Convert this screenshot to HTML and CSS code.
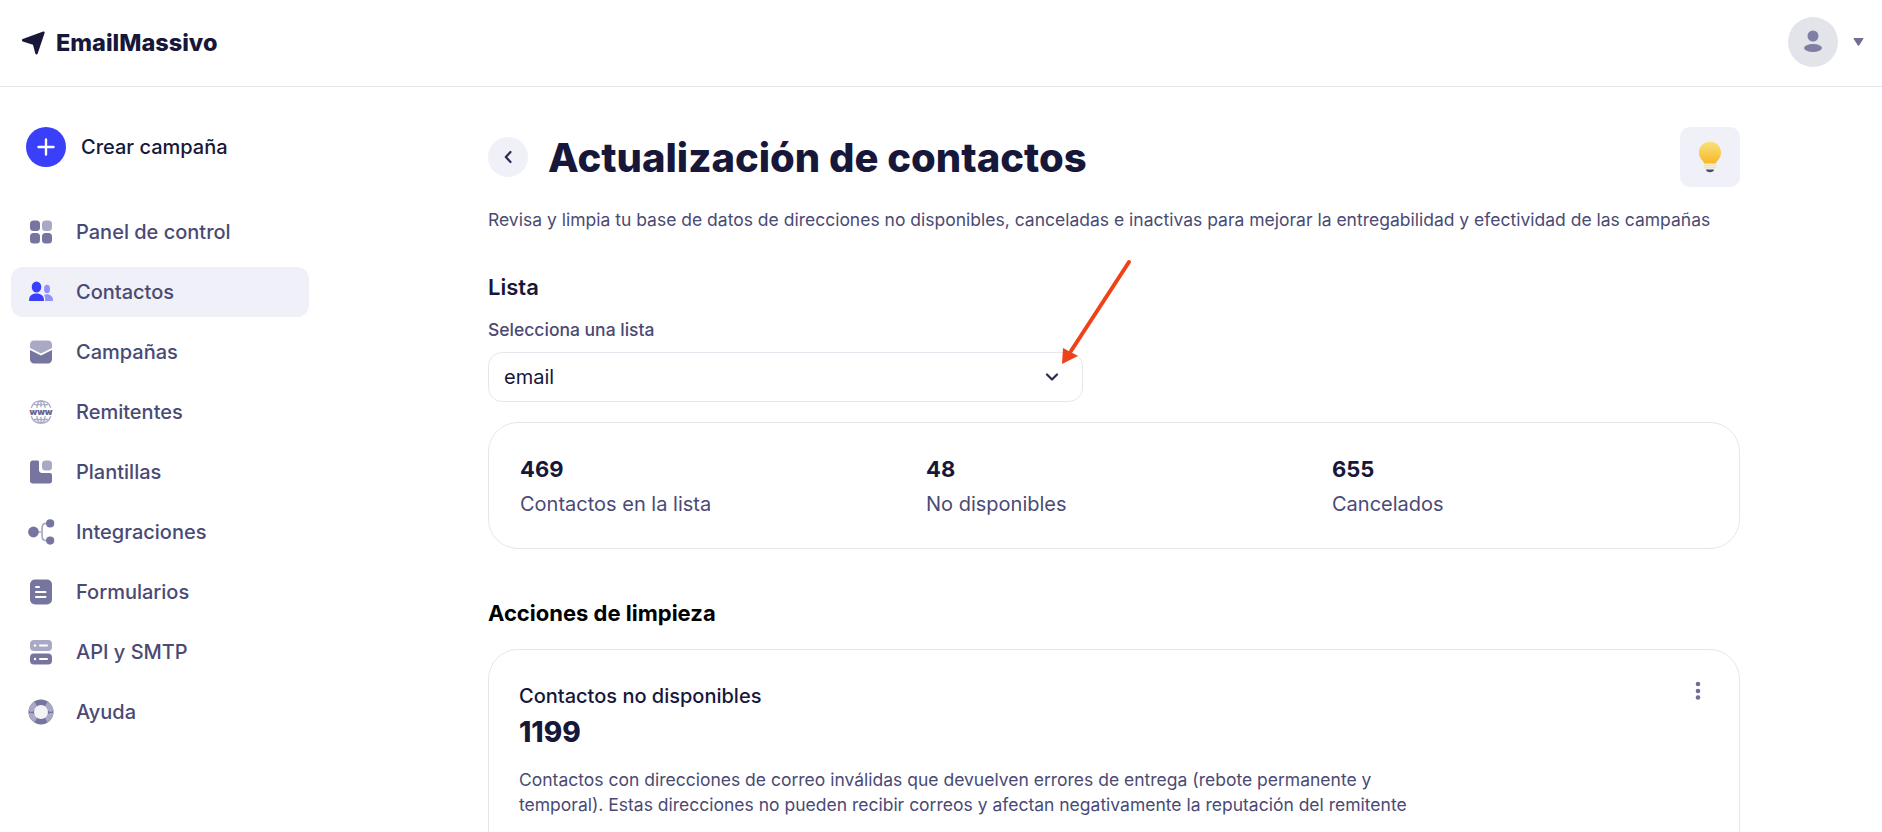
FILE: index.html
```html
<!DOCTYPE html>
<html lang="es">
<head>
  <meta charset="UTF-8">
  <meta name="viewport" content="width=device-width, initial-scale=1.0">
  <title>Actualización de contactos</title>
  <link rel="stylesheet" href="styles.css">
</head>
<body>
  <header class="topbar">
    <div class="brand">
      <svg class="brand-icon" viewBox="0 0 24 24"><path d="M22.200 .6c.9-.3 1.700.5 1.400 1.400l-7 20.700c-.4 1.100-1.900 1.100-2.200 0l-2.400-9-10.300-3.300c-1.100-.4-1.100-1.900 0-2.300z" fill="#17173a"/></svg>
      <span>EmailMassivo</span>
    </div>
    <div class="account">
      <div class="avatar">
        <svg viewBox="0 0 50 50" width="50" height="50"><circle cx="25" cy="19" r="5.500" fill="#7f7fa3"/><ellipse cx="25" cy="31" rx="9" ry="4" fill="#7f7fa3"/></svg>
      </div>
      <svg class="caret" viewBox="0 0 10 8" width="11" height="8"><path d="M.8 0h8.400c.6 0 .9.6.6 1.100L5.600 7.400c-.3.4-.9.4-1.200 0L.2 1.100C-.1.600.2 0 .8 0z" fill="#6f6f95"/></svg>
    </div>
  </header>

  <div class="layout">
    <aside class="sidebar">
      <div class="create">
        <span class="create-btn">
          <svg viewBox="0 0 40 40" width="40" height="40"><path d="M20 12.500v15M12.500 20h15" stroke="#fff" stroke-width="2.400" stroke-linecap="round"/></svg>
        </span>
        <span>Crear campaña</span>
      </div>
      <nav class="nav">
        <a class="nav-item">
          <svg viewBox="0 0 24 24"><rect x="1" y="0.500" width="10" height="10.500" rx="3.500" fill="#7575a0"/><rect x="13" y="0.500" width="10" height="10.500" rx="3.500" fill="#a9a9c6"/><rect x="1" y="13" width="10" height="10.500" rx="3.500" fill="#7575a0"/><rect x="13" y="13" width="10" height="10.500" rx="3.500" fill="#7575a0"/></svg>
          Panel de control
        </a>
        <a class="nav-item active">
          <svg viewBox="0 0 24 24"><ellipse cx="7.500" cy="7" rx="4.800" ry="5.500" fill="#3a3ffa"/><path d="M0 20.500c0-4.500 3-7 7.500-7s7.500 2.500 7.500 7c0 .4-.2.500-.6.500H.6c-.4 0-.6-.1-.6-.5z" fill="#3a3ffa"/><ellipse cx="18" cy="9" rx="3" ry="4.300" fill="#8f92fb"/><path d="M16 21c.5-1.500.3-4.500-1-6 .8-.5 1.800-.7 3-.7 3.500 0 6 2.300 6 6.200 0 .4-.2.500-.5.500z" fill="#8f92fb"/></svg>
          Contactos
        </a>
        <a class="nav-item">
          <svg viewBox="0 0 24 24"><path d="M1 4.500C1 2 3 .5 5 .5h14c2 0 4 1.500 4 4V8l-11 5.500L1 8z" fill="#a9a9c6"/><path d="M1 10l11 5.500L23 10v9.500c0 2.200-1.800 4-4 4H5c-2.200 0-4-1.800-4-4z" fill="#7575a0"/></svg>
          Campañas
        </a>
        <a class="nav-item">
          <svg viewBox="0 0 28 28" class="icon-wide">
            <g fill="none" stroke="#a9a9c6" stroke-width="1.500">
              <path d="M3.500 9.500C5 5 9 2 14 2s9 3 10.500 7.500"/>
              <path d="M3.500 18.500C5 23 9 26 14 26s9-3 10.500-7.500"/>
              <path d="M9.500 9.500C10 5 12 2 14 2s4 3 4.500 7.500M9.500 18.500C10 23 12 26 14 26s4-3 4.500-7.500M14 2v7M14 19v7"/>
              <path d="M6.500 6h15M6.500 22h15"/>
            </g>
            <text x="14" y="17.500" class="www">www</text>
          </svg>
          Remitentes
        </a>
        <a class="nav-item">
          <svg viewBox="0 0 24 24"><path d="M1 3.500C1 2 2 .5 3.500 .5h5c1 0 1.500.7 1.500 1.500v8c0 1.700 1.300 3 3 3h8c1 0 2 .8 2 2v6c0 1.500-1 2.500-2.500 2.500h-17C2 23.500 1 22.500 1 21z" fill="#7575a0"/><rect x="13" y="0.500" width="10" height="10" rx="3.500" fill="#a9a9c6"/></svg>
          Plantillas
        </a>
        <a class="nav-item">
          <svg viewBox="0 0 26 24" class="icon-wide"><path d="M10 12h3M21 4h-3c-3 0-4 2-4 4v8c0 2 1 4 4 4h3" fill="none" stroke="#a9a9c6" stroke-width="1.600"/><circle cx="6" cy="12" r="5" fill="#7575a0"/><circle cx="21.500" cy="4" r="3.800" fill="#7575a0"/><circle cx="21.500" cy="20" r="3.800" fill="#7575a0"/></svg>
          Integraciones
        </a>
        <a class="nav-item">
          <svg viewBox="0 0 24 26" class="icon-tall"><rect x="1" y="0.500" width="22" height="25" rx="5" fill="#7575a0"/><g fill="#fff"><rect x="6" y="7" width="5" height="2" rx="1"/><rect x="6" y="12" width="11.500" height="2" rx="1"/><rect x="6" y="17" width="11.500" height="2" rx="1"/></g></svg>
          Formularios
        </a>
        <a class="nav-item">
          <svg viewBox="0 0 24 26" class="icon-tall"><rect x="1" y="1" width="22" height="11" rx="4" fill="#a9a9c6"/><rect x="1" y="14.500" width="22" height="11" rx="4" fill="#7575a0"/><g fill="#fff"><circle cx="6" cy="6.500" r="1.200"/><rect x="10" y="5.500" width="9" height="2" rx="1"/><circle cx="6" cy="20" r="1.200"/><rect x="10" y="19" width="9" height="2" rx="1"/></g></svg>
          API y SMTP
        </a>
        <a class="nav-item">
          <svg viewBox="0 0 26 26" class="icon-wide"><circle cx="13" cy="13" r="12.500" fill="#7575a0"/><path d="M6.500 2.800L10 9 4 13l-3.500-1a12.500 12.500 0 0 1 6-9.200zM19.500 2.800L16 9l6 4 3.500-1a12.500 12.500 0 0 0-6-9.200zM4 14l6 3-3.500 6.200A12.500 12.500 0 0 1 .5 14zM22 14l-6 3 3.500 6.200a12.500 12.500 0 0 0 6-9.200z" fill="#a9a9c6"/><circle cx="13" cy="13" r="7" fill="#f2f2f7"/></svg>
          Ayuda
        </a>
      </nav>
    </aside>

    <main class="content">
      <div class="title-row">
        <div class="title-left">
          <button class="back">
            <svg viewBox="0 0 10 14" width="10" height="14"><path d="M7.500 2L2.800 7l4.700 5" fill="none" stroke="#2a2a52" stroke-width="2.200" stroke-linecap="round" stroke-linejoin="round"/></svg>
          </button>
          <h1>Actualización de contactos</h1>
        </div>
        <div class="tip">
          <svg viewBox="0 0 24 32" width="24" height="32">
            <defs><linearGradient id="bulb" x1="0" y1="0" x2="0" y2="1"><stop offset="0" stop-color="#fbe07c"/><stop offset="1" stop-color="#f6b520"/></linearGradient></defs>
            <path d="M12 .8C5.800.8 1 5.500 1 11.500c0 3.500 1.500 6 3.500 8.200 1.300 1.500 2 2.800 2 4.300h11c0-1.500.7-2.800 2-4.300 2-2.200 3.500-4.700 3.500-8.200C23 5.500 18.200.8 12 .8z" fill="url(#bulb)"/>
            <rect x="5.800" y="22.500" width="12.400" height="5.500" rx="1" fill="#f7ecd6"/>
            <path d="M6 24.500h12M6 26.500h12" stroke="#eedcb8" stroke-width=".8"/>
            <path d="M8 28.500h8c0 1.800-2 2.700-4 2.700s-4-.9-4-2.700z" fill="#4b4a78"/>
          </svg>
        </div>
      </div>
      <p class="subtitle">Revisa y limpia tu base de datos de direcciones no disponibles, canceladas e inactivas para mejorar la entregabilidad y efectividad de las campañas</p>

      <h2 class="section-title">Lista</h2>
      <label class="field-label">Selecciona una lista</label>
      <div class="select">
        <span>email</span>
        <svg viewBox="0 0 14 10" width="14" height="10"><path d="M2 2.500l5 5 5-5" fill="none" stroke="#2a2a52" stroke-width="2.200" stroke-linecap="round" stroke-linejoin="round"/></svg>
      </div>

      <section class="card stats">
        <div class="stat"><strong>469</strong><span>Contactos en la lista</span></div>
        <div class="stat"><strong>48</strong><span>No disponibles</span></div>
        <div class="stat"><strong>655</strong><span>Cancelados</span></div>
      </section>

      <h2 class="section-title actions-title">Acciones de limpieza</h2>
      <section class="card action">
        <svg class="dots" viewBox="0 0 6 20" width="6" height="20"><circle cx="3" cy="3" r="2.300"/><circle cx="3" cy="10" r="2.300"/><circle cx="3" cy="16.500" r="2.300"/></svg>
        <h3>Contactos no disponibles</h3>
        <div class="action-count">1199</div>
        <p>Contactos con direcciones de correo inválidas que devuelven errores de entrega (rebote permanente y temporal). Estas direcciones no pueden recibir correos y afectan negativamente la reputación del remitente</p>
      </section>
    </main>
  </div>

  <!-- annotation drawn over the screenshot -->
  <svg class="annotation" viewBox="0 0 90 120" width="90" height="120">
    <path d="M71 4L13 93" stroke="#ee4318" stroke-width="4" stroke-linecap="round"/>
    <path d="M4 106l1-16 15 8z" fill="#ee4318"/>
  </svg>
</body>
</html>
```
FILE: styles.css
```css
* {
  box-sizing: border-box;
}

html, body {
  height: 100%;
}

body {
  margin: 0;
  font-family: 'Inter', sans-serif;
  background-color: #fff;
  color: #17173a;
  overflow: hidden;
}

.topbar {
  height: 87px;
  border-bottom: 1px solid #e6e6ee;
  display: flex;
  align-items: center;
  justify-content: space-between;
  padding: 0 18px 1px 21px;
}

.brand {
  display: flex;
  align-items: center;
  gap: 11px;
  font-size: 23.500px;
  font-weight: 800;
  color: #17173a;
}

.brand-icon {
  width: 24px;
  height: 24px;
}

.account {
  display: flex;
  align-items: center;
  gap: 15px;
  margin-top: -2px;
}

.avatar {
  width: 50px;
  height: 50px;
  border-radius: 50%;
  background-color: #e3e3ea;
}

.avatar svg {
  display: block;
}

.caret {
  display: block;
}

.layout {
  display: flex;
}

.sidebar {
  width: 320px;
  flex-shrink: 0;
  padding: 40px 11px 0;
}

.create {
  display: flex;
  align-items: center;
  gap: 15px;
  padding-left: 15px;
  font-size: 20px;
  font-weight: 500;
  color: #17173a;
}

.create-btn {
  width: 40px;
  height: 40px;
  border-radius: 50%;
  background-color: #3a3ffa;
}

.create-btn svg {
  display: block;
}

.nav {
  margin-top: 40px;
  display: flex;
  flex-direction: column;
  gap: 10px;
}

.nav-item {
  height: 50px;
  width: 298px;
  display: flex;
  align-items: center;
  gap: 23px;
  padding-left: 18px;
  border-radius: 12px;
  font-size: 20px;
  font-weight: 500;
  color: #4a4a75;
}

.nav-item.active {
  background-color: #f0f0f8;
}

.nav-item svg {
  width: 24px;
  height: 24px;
  flex-shrink: 0;
}

.nav-item svg.icon-wide {
  width: 28px;
  height: 26px;
  margin: 0 -2px;
}

.nav-item svg.icon-tall {
  height: 26px;
}

.www {
  font-family: 'Inter', sans-serif;
  font-size: 9.500px;
  font-weight: 900;
  fill: #66668f;
  text-anchor: middle;
}

.content {
  flex: 1;
  padding: 40px 142px 0 168px;
}

.title-row {
  display: flex;
  align-items: flex-start;
  justify-content: space-between;
  height: 60px;
}

.title-left {
  display: flex;
  align-items: center;
  gap: 20px;
  height: 60px;
}

.back {
  width: 40px;
  height: 40px;
  padding: 0;
  border: none;
  border-radius: 50%;
  background-color: #f0f0f8;
  display: flex;
  align-items: center;
  justify-content: center;
}

h1 {
  margin: 0;
  font-size: 40px;
  font-weight: 800;
  color: #17173a;
}

.tip {
  width: 60px;
  height: 60px;
  border-radius: 10px;
  background-color: #f0f0f8;
  display: flex;
  align-items: center;
  justify-content: center;
}

.subtitle {
  margin: 22px 0 0;
  font-size: 17.500px;
  line-height: 22px;
  color: #4a4a75;
}

.section-title {
  margin: 42px 0 0;
  font-size: 22px;
  line-height: 28px;
  font-weight: 600;
  color: #17173a;
}

.field-label {
  display: block;
  margin-top: 18px;
  font-size: 17.500px;
  line-height: 22px;
  font-weight: 500;
  color: #4a4a75;
}

.select {
  margin-top: 11px;
  width: 595px;
  height: 50px;
  border: 1px solid #e6e6ee;
  border-radius: 14px;
  display: flex;
  align-items: center;
  justify-content: space-between;
  padding: 0 23px 0 15px;
  font-size: 20px;
  color: #17173a;
}

.card {
  border: 1px solid #e6e6ee;
  border-radius: 30px;
}

.stats {
  margin-top: 20px;
  height: 127px;
  display: grid;
  grid-template-columns: repeat(3, 406px);
  align-items: center;
  padding: 0 0 0 31px;
}

.stat {
  display: flex;
  flex-direction: column;
  gap: 8px;
}

.stat strong {
  font-size: 22px;
  line-height: 28px;
  font-weight: 700;
  color: #17173a;
}

.stat span {
  font-size: 20px;
  line-height: 26px;
  color: #4a4a75;
}

.actions-title {
  margin-top: 50px;
  font-weight: 700;
  color: #000;
}

.action {
  position: relative;
  margin-top: 22px;
  padding: 33px 30px 60px;
}

.dots {
  position: absolute;
  top: 31px;
  right: 38px;
  fill: #6f6f95;
}

.action h3 {
  margin: 0;
  font-size: 20px;
  line-height: 26px;
  font-weight: 500;
  color: #17173a;
}

.action-count {
  margin-top: 5px;
  font-size: 28px;
  line-height: 36px;
  font-weight: 800;
  color: #17173a;
}

.action p {
  margin: 17px 0 0;
  max-width: 900px;
  font-size: 17.500px;
  line-height: 25px;
  color: #4a4a75;
}

.annotation {
  position: absolute;
  left: 1058px;
  top: 258px;
}
```
